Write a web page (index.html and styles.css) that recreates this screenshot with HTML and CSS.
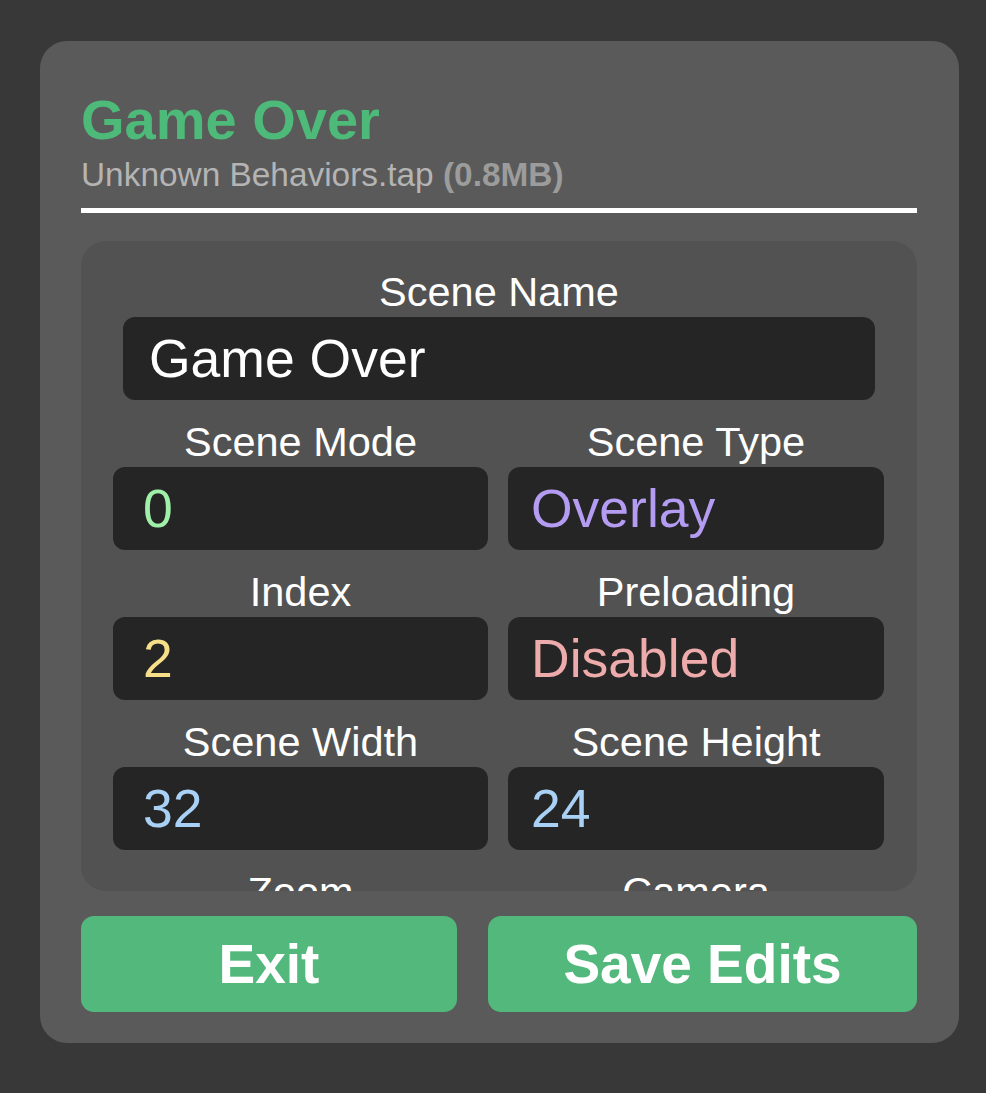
FILE: index.html
```html
<!DOCTYPE html>
<html lang="en">
<head>
<meta charset="utf-8">
<title>Game Over</title>
<link rel="stylesheet" href="styles.css">
</head>
<body>
<div class="card">
  <h1 class="title">Game Over</h1>
  <div class="subtitle">Unknown Behaviors.tap <b>(0.8MB)</b></div>
  <div class="divider"></div>
  <div class="panel">
    <div class="field wide">
      <div class="label">Scene Name</div>
      <div class="input v-white">Game Over</div>
    </div>
    <div class="grid">
      <div class="field">
        <div class="label">Scene Mode</div>
        <div class="input v-green">0</div>
      </div>
      <div class="field">
        <div class="label">Scene Type</div>
        <div class="input right v-purple">Overlay</div>
      </div>
      <div class="field">
        <div class="label">Index</div>
        <div class="input v-yellow">2</div>
      </div>
      <div class="field">
        <div class="label">Preloading</div>
        <div class="input right v-pink">Disabled</div>
      </div>
      <div class="field">
        <div class="label">Scene Width</div>
        <div class="input v-blue">32</div>
      </div>
      <div class="field">
        <div class="label">Scene Height</div>
        <div class="input right v-blue">24</div>
      </div>
      <div class="field">
        <div class="label">Zoom</div>
        <div class="input v-blue">1</div>
      </div>
      <div class="field">
        <div class="label">Camera</div>
        <div class="input right v-blue">0</div>
      </div>
    </div>
  </div>
  <div class="actions">
    <button class="btn">Exit</button>
    <button class="btn">Save Edits</button>
  </div>
</div>
</body>
</html>
```
FILE: styles.css
```css
html, body {
  margin: 0;
  padding: 0;
}
body {
  background: #383838;
  font-family: "Liberation Sans", Arial, sans-serif;
  color: #fff;
  padding: 41px 0 0 40px;
}
.card {
  box-sizing: border-box;
  width: 919px;
  height: 1002px;
  background: #5a5a5a;
  border-radius: 27px;
  padding: 47px 42px 31px 41px;
  display: flex;
  flex-direction: column;
}
.title {
  margin: 0;
  font-size: 56px;
  line-height: 64px;
  font-weight: 700;
  color: #4dba79;
}
.subtitle {
  margin-top: 4px;
  font-size: 33.4px;
  line-height: 38px;
  color: #b4b4b4;
}
.subtitle b {
  color: #9c9c9c;
  font-weight: 700;
}
.divider {
  margin-top: 14px;
  height: 5px;
  background: #fff;
}
.panel {
  margin-top: 28px;
  height: 650px;
  box-sizing: border-box;
  background: #525252;
  border-radius: 25px;
  padding: 27px 32px 0 32px;
  overflow: hidden;
}
.field.wide {
  margin: 0 10px;
}
.grid {
  display: grid;
  grid-template-columns: 375px 376px;
  column-gap: 20px;
}
.grid .field {
  margin-top: 18px;
}
.label {
  font-size: 41.5px;
  line-height: 47px;
  text-align: center;
  color: #fff;
}
.input {
  margin-top: 2px;
  height: 83px;
  box-sizing: border-box;
  background: #252525;
  border-radius: 12px;
  display: flex;
  align-items: center;
  padding: 0 28px 0 30px;
  font-size: 53.5px;
  line-height: 60px;
  white-space: nowrap;
}
.input.right {
  padding-left: 23px;
}
.field.wide .input {
  padding-left: 26px;
}
.v-white { color: #ffffff; }
.v-green { color: #9ff0a9; }
.v-purple { color: #b39cf2; }
.v-yellow { color: #f6df88; }
.v-pink { color: #eeabab; }
.v-blue { color: #a9d1f5; }
.actions {
  margin-top: 25px;
  display: grid;
  grid-template-columns: 376px 429px;
  column-gap: 31px;
}
.btn {
  height: 96px;
  border: none;
  border-radius: 13px;
  background: #53b87c;
  color: #fff;
  font-family: "Liberation Sans", Arial, sans-serif;
  font-size: 55px;
  line-height: 64px;
  font-weight: 700;
  padding: 0;
  display: flex;
  align-items: center;
  justify-content: center;
}
```
